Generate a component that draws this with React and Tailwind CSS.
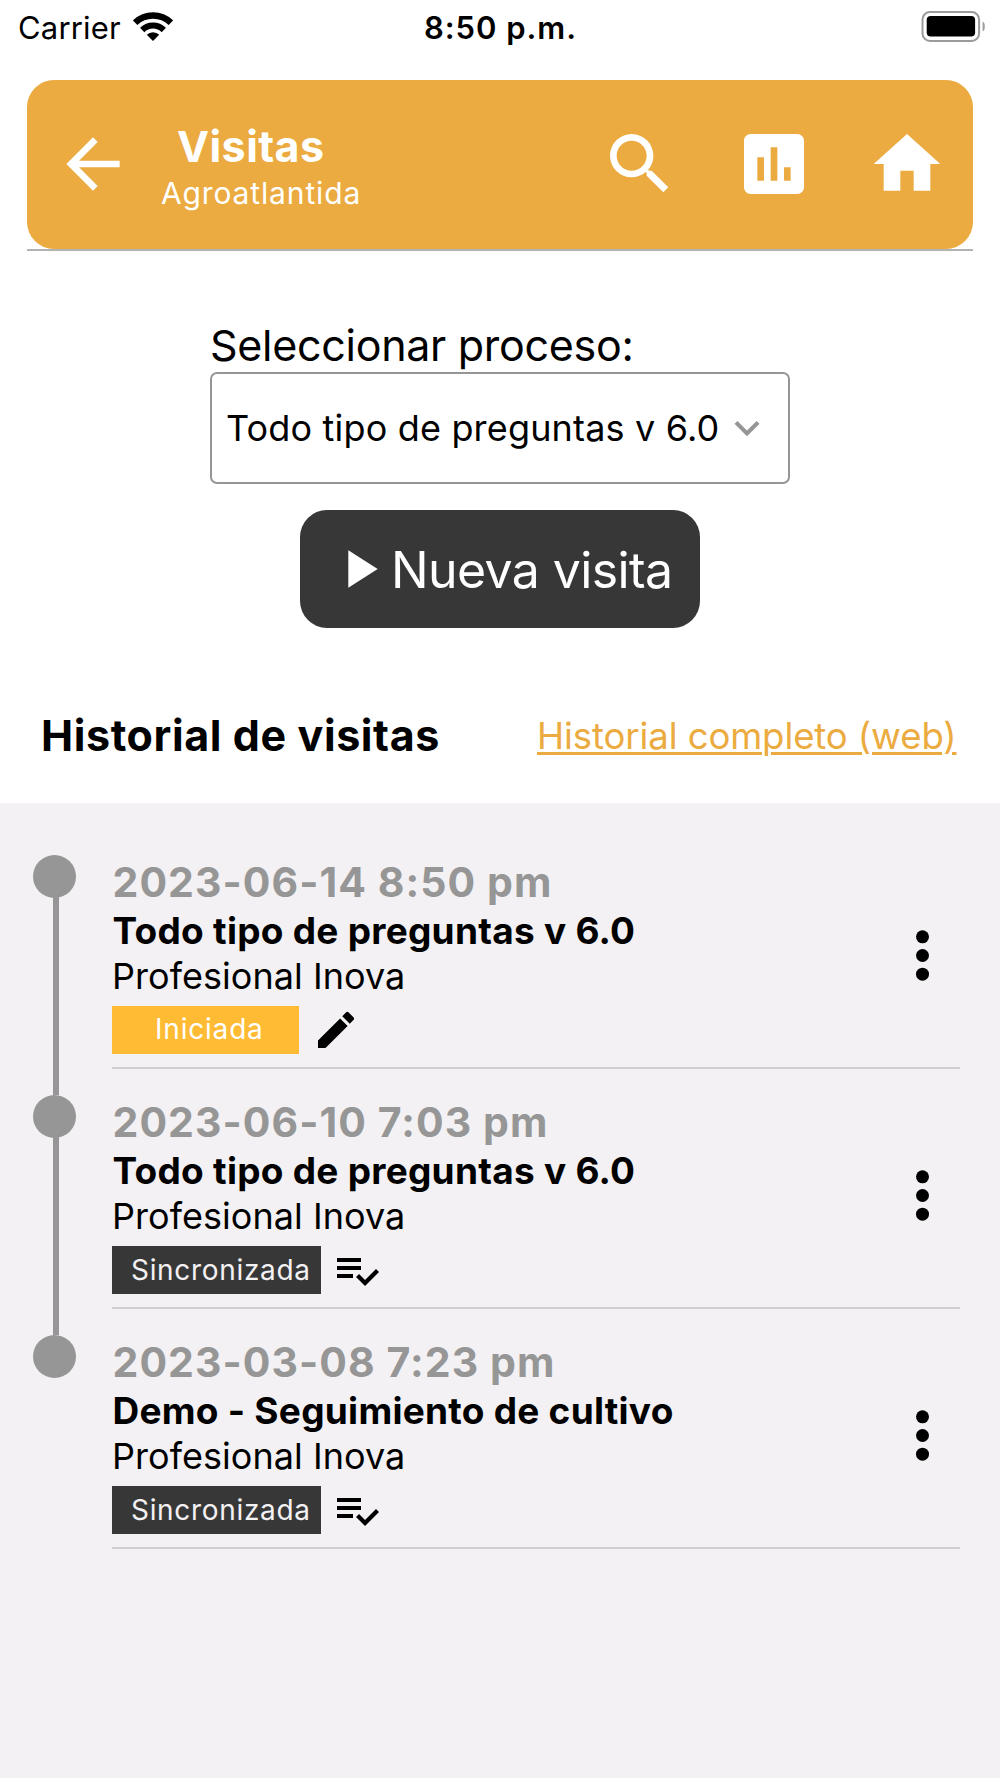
import React from 'react';
import { MdArrowBack, MdSearch, MdPoll, MdExpandMore, MdPlayArrow, MdEdit } from 'react-icons/md';

const visits = [
  { id: 1, date: '2023-06-14 8:50 pm', process: 'Todo tipo de preguntas v 6.0', user: 'Profesional Inova', status: 'Iniciada' },
  { id: 2, date: '2023-06-10 7:03 pm', process: 'Todo tipo de preguntas v 6.0', user: 'Profesional Inova', status: 'Sincronizada' },
  { id: 3, date: '2023-03-08 7:23 pm', process: 'Demo - Seguimiento de cultivo', user: 'Profesional Inova', status: 'Sincronizada' },
];

const WifiIcon = () => (
  <svg className="w-10 h-[29px]" viewBox="0 0 40 29" fill="none" stroke="#000">
    <path d="M2.1 10.75 A25.6 25.6 0 0 1 37.9 10.75" strokeWidth="6.4" />
    <path d="M9.2 18 A15.4 15.4 0 0 1 30.8 18" strokeWidth="6" />
    <path d="M13.8 22.8 A8.7 8.7 0 0 1 26.2 22.8 L20 29 Z" fill="#000" stroke="none" />
  </svg>
);

const BatteryIcon = () => (
  <svg className="w-16 h-[31px]" viewBox="0 0 64 31">
    <rect x="1.5" y="1" width="56.6" height="29" rx="7.5" fill="none" stroke="#9b9b9b" strokeWidth="2" />
    <rect x="5.7" y="5" width="48.4" height="20.4" rx="4" fill="#000" />
    <path d="M61.6 10.5c1.6.6 2.2 2.6 2.2 5s-.6 4.4-2.2 5z" fill="#9b9b9b" />
  </svg>
);

const HomeIcon = () => (
  <svg className="w-20 h-20" viewBox="0 0 24 24" fill="currentColor">
    <path d="M10 20v-6h4v6h5v-8h3L12 3 2 12h3v8z" />
  </svg>
);

const PlaylistCheckIcon = () => (
  <svg className="ml-[11.5px] w-12 h-12" viewBox="0 0 24 24" fill="currentColor">
    <path d="M14 10H2v2h12v-2zm0-4H2v2h12V6zM2 16h8v-2H2v2zm19.5-4.5L23 13l-6.99 7-4.51-4.5L13 14l3.01 3 5.49-5.5z" />
  </svg>
);

const StatusBar = () => (
  <div className="grid grid-cols-3 h-14 mb-6 text-[31px] leading-[56px]">
    <div className="flex pl-[18px]">
      <span className="tracking-[0.18px]">Carrier</span>
      <span className="ml-3 mt-3">
        <WifiIcon />
      </span>
    </div>
    <span className="pl-px text-center font-semibold tracking-[0.95px]">8:50 p.m.</span>
    <div className="flex justify-end pr-[15px] pt-[11px]">
      <BatteryIcon />
    </div>
  </div>
);

const Header = () => (
  <header className="mx-[27px] border-b-2 border-[#b3b3b3]">
    <div className="h-[169px] pb-px pl-[26px] pr-[26px] flex items-center bg-[#ebab40] rounded-[27px] text-white">
      <MdArrowBack className="w-20 h-20" />
      <div className="ml-7 self-start mt-[43px]">
        <h1 className="pl-4 text-[43px] leading-[46px] font-bold tracking-[0.43px]">Visitas</h1>
        <p className="text-[30px] leading-[48px] tracking-[0.86px]">Agroatlantida</p>
      </div>
      <div className="ml-auto flex gap-[53.5px]">
        <MdSearch className="w-20 h-20" />
        <MdPoll className="w-20 h-20" />
        <HomeIcon />
      </div>
    </div>
  </header>
);

const StatusBadge = ({ status }) => {
  if (status === 'Iniciada') {
    return (
      <div className="mt-2 flex items-center">
        <span className="w-[187px] h-12 pl-[43px] bg-[#ffbb33] text-white text-[28px] leading-[47px] tracking-[0.8px]">
          {status}
        </span>
        <MdEdit className="ml-[13px] w-12 h-12" />
      </div>
    );
  }
  return (
    <div className="mt-2 flex items-center">
      <span className="w-[209px] h-12 pl-[19px] bg-[#373737] text-[#f3f1f3] text-[28px] leading-[48px] tracking-[0.68px]">
        {status}
      </span>
      <PlaylistCheckIcon />
    </div>
  );
};

const VisitItem = ({ visit, first, last }) => (
  <li className="flex h-60">
    {/* timeline */}
    <div className="w-[79px] flex flex-col">
      <div className={first ? 'h-[26px]' : 'h-[26px] ml-5 w-[5.5px] bg-[#969696]'} />
      <div className="w-[43px] h-[43px] rounded-full bg-[#969696]" />
      {!last && <div className="flex-1 ml-5 w-[5.5px] -mt-px bg-[#969696]" />}
    </div>
    <div className="flex-1 pt-[28px] pb-[13px] pr-[31px] flex items-center justify-between border-b-2 border-[#cfcdcf]">
      <div>
        <p className="pt-px pl-[0.5px] text-[41px] leading-[49px] font-bold tracking-[1.07px] text-[#969696]">{visit.date}</p>
        <p className="pl-[0.5px] text-[37px] leading-[48px] font-bold tracking-[0.26px]">{visit.process}</p>
        <p className="-mt-px text-[36px] leading-[44px] tracking-[0.05px]">{visit.user}</p>
        <StatusBadge status={visit.status} />
      </div>
      <svg className="w-[13px] h-[51px]" viewBox="0 0 13 51">
        <circle cx="6.5" cy="6.8" r="6.5" />
        <circle cx="6.5" cy="25.5" r="6.5" />
        <circle cx="6.5" cy="44.2" r="6.5" />
      </svg>
    </div>
  </li>
);

const App = () => {
  return (
    <div className="w-[1000px] h-[1778px] overflow-hidden flex flex-col bg-white text-black font-['Inter',sans-serif] whitespace-nowrap">
      <StatusBar />
      <Header />

      <div className="w-[580px] mx-auto mt-[68px]">
        <label className="block text-[43px] leading-[52px] mb-px tracking-[-0.29px]">Seleccionar proceso:</label>
        <div className="h-28 pl-[14px] flex items-center border-2 border-[#969696] rounded-[7px]">
          <span className="text-[36px] tracking-[0.17px]">Todo tipo de preguntas v 6.0</span>
          <MdExpandMore className="ml-[2px] w-[50px] h-[50px] text-[#969696]" />
        </div>
      </div>

      <button className="mt-[26px] mx-auto w-[400px] h-[118px] pl-[27px] flex items-center bg-[#373737] rounded-[27px] text-white">
        <MdPlayArrow className="w-16 h-16" />
        <span className="pt-[3px] text-[50px] tracking-[-0.6px]">Nueva visita</span>
      </button>

      <div className="h-[175px] pt-10 pl-[41px] pr-[43.5px] flex items-center justify-between">
        <h2 className="text-[43px] font-bold tracking-[0.6px]">Historial de visitas</h2>
        <a href="#" className="pt-px text-[36.5px] tracking-[-0.08px] text-[#ebab40] underline decoration-[2.5px] underline-offset-[3px]">
          Historial completo (web)
        </a>
      </div>

      <ul className="flex-1 pt-[26px] pl-[33px] pr-10 bg-[#f3f1f3]">
        {visits.map((v, i) => (
          <VisitItem key={v.id} visit={v} first={i === 0} last={i === visits.length - 1} />
        ))}
      </ul>
    </div>
  );
};

export default App;
